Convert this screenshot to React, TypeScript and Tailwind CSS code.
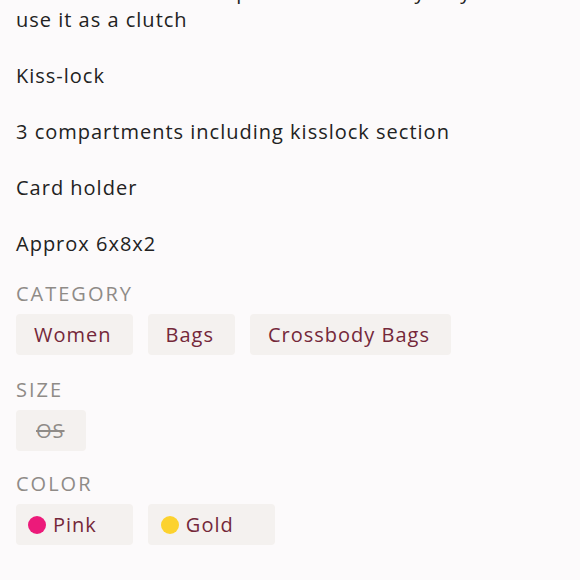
import { ReactNode } from "react";

const font = { fontFamily: "'Open Sans', 'Noto Sans', sans-serif" };

function Chip({ children, muted, className = "pl-[18px] pr-[21px]" }: { children: ReactNode; muted?: boolean; className?: string }) {
  return (
    <div
      className={
        "flex h-[41px] items-center rounded-[4px] bg-[#f4f1ef] text-[20px] tracking-[1px] " +
        (muted ? "text-[#8f8b87] line-through " : "text-[#74283a] ") +
        className
      }
    >
      {children}
    </div>
  );
}

function Section({ title, children, className = "" }: { title: string; children: ReactNode; className?: string }) {
  return (
    <div className={className}>
      <h3 className="h-[30px] text-[20px] leading-[30px] font-medium tracking-[2px] text-[#8f8b87] uppercase">{title}</h3>
      <div className="mt-[5px] flex gap-[15px]">{children}</div>
    </div>
  );
}

export default function App() {
  const lines = ["Kiss-lock", "3 compartments including kisslock section", "Card holder", "Approx 6x8x2"];

  return (
    <div className="h-[580px] w-[580px] overflow-hidden bg-[#fcfafb] px-4" style={font}>
      <div className="-mt-[22px] text-[20px] leading-[28px] tracking-[1px] text-[#222]">
        <p className="mb-[28px]">
          <span className="whitespace-nowrap">Removable chain strap. Wear crossbody or you can</span>
          <br />
          use it as a clutch
        </p>
        {lines.map((l) => (
          <p key={l} className="mb-[28px]">
            {l}
          </p>
        ))}
      </div>

      <div className="-mt-[7px] flex flex-col gap-[20px]">
        <Section title="Category">
          <Chip>Women</Chip>
          <Chip>Bags</Chip>
          <Chip>Crossbody Bags</Chip>
        </Section>
        <Section title="Size">
          <Chip muted className="pl-[20px] pr-[21px]">OS</Chip>
        </Section>
        <Section title="Color" className="-mt-[2px]">
          <Chip className="pl-[12px] pr-[36px] text-[#6e2234]">
            <span className="mr-[7px] h-[18px] w-[18px] rounded-full bg-[#ec1a7a]" />
            Pink
          </Chip>
          <Chip className="pl-[13px] pr-[41px] text-[#6e2234]">
            <span className="mr-[7px] h-[18px] w-[18px] rounded-full bg-[#fcd22e]" />
            Gold
          </Chip>
        </Section>
      </div>
    </div>
  );
}
